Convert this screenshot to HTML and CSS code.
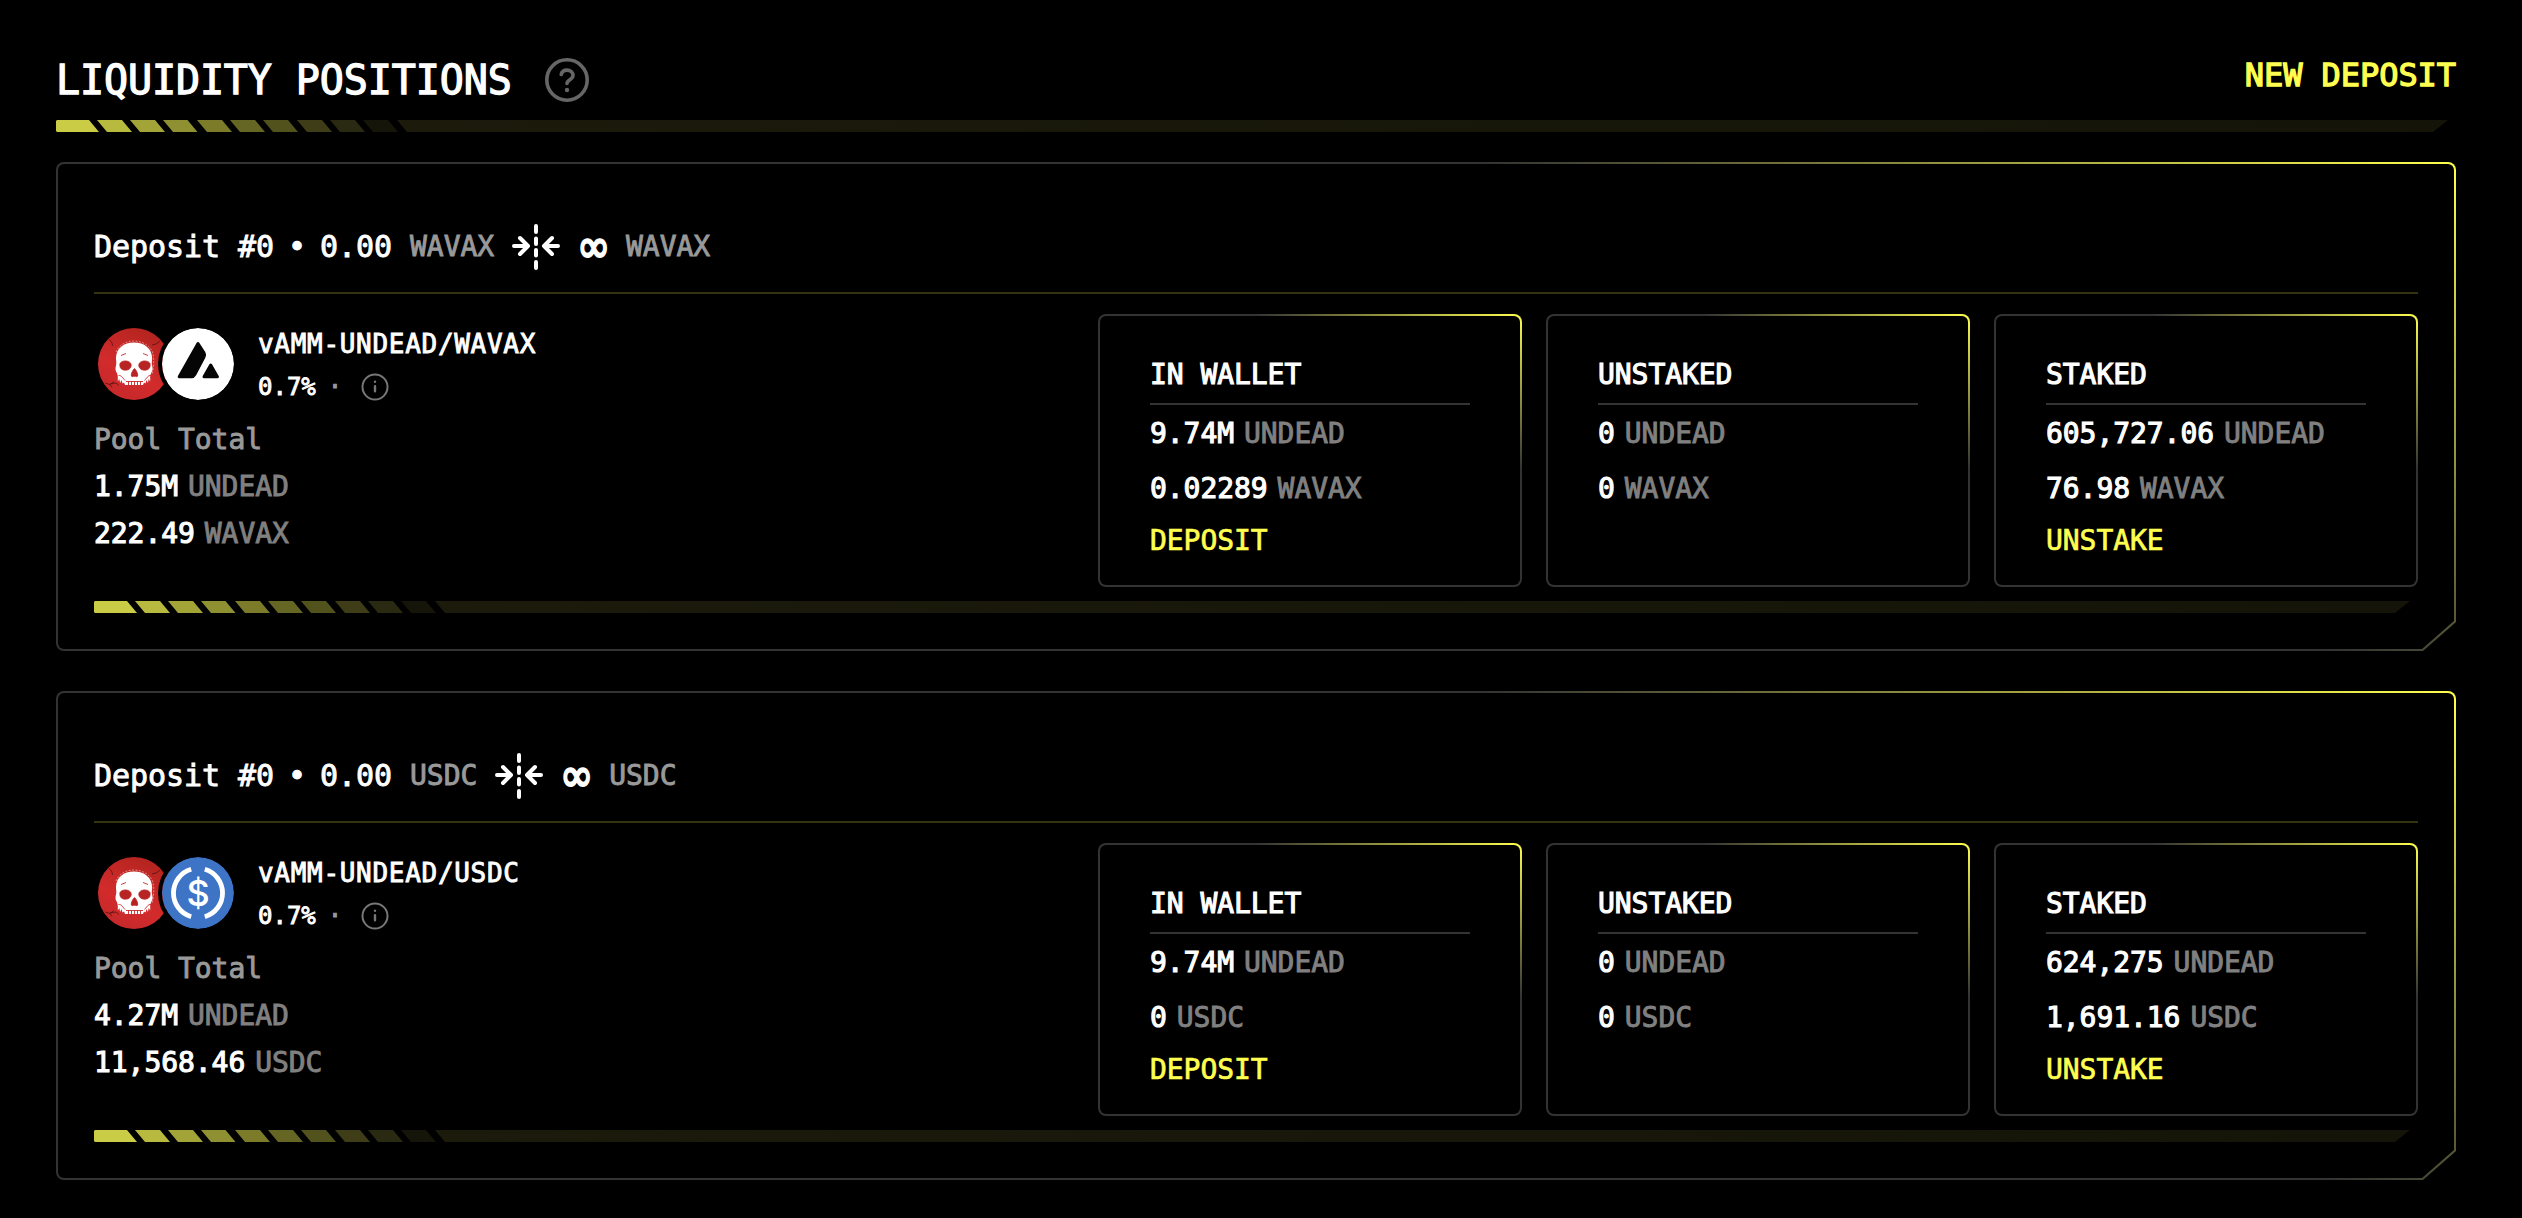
FILE: index.html
```html
<!DOCTYPE html>
<html lang="en">
<head>
<meta charset="utf-8">
<title>Liquidity Positions</title>
<link rel="stylesheet" href="styles.css">
</head>
<body>
<svg class="defs" width="0" height="0" aria-hidden="true">
  <defs>
    <symbol id="stripes" viewBox="0 0 352 12">
      <path fill="#cacc45" d="M1 0H33L43 12H1L0 11V1z"/>
      <path fill="#b8ba3f" d="M41 0h25l10 12H51z"/>
      <path fill="#a3a438" d="M74 0h25l10 12H84z"/>
      <path fill="#8f9031" d="M107 0h24.500l10 12H117z"/>
      <path fill="#7b7b2a" d="M141 0h25l10 12H151z"/>
      <path fill="#666624" d="M174 0h25l10 12H184z"/>
      <path fill="#52521d" d="M207 0h25l10 12H217z"/>
      <path fill="#3e3d17" d="M241 0h25l10 12H251z"/>
      <path fill="#2a2911" d="M274 0h25l10 12H284z"/>
      <path fill="#151509" d="M307 0h25l10 12H317z"/>
    </symbol>
    <linearGradient id="blood" x1="0.7" y1="0" x2="0.2" y2="1">
      <stop offset="0" stop-color="#b3241f"/>
      <stop offset="0.6" stop-color="#d22b2c"/>
      <stop offset="1" stop-color="#c4282a"/>
    </linearGradient>
    <symbol id="undead" viewBox="0 0 72 72">
      <circle cx="36" cy="36" r="36" fill="url(#blood)"/>
      <path fill="none" stroke="#5a1210" stroke-width="0.8" d="M11 11l3 4 0.500 3M62 13l-4 3-4 1M7 55l5 1.500 4-3M12 56.500l2 3M12 56l6-1 3 2.500"/>
      <path fill="#fff" d="M36 14.500c-10.500 0-17.500 6-18 15-.2 3 .8 5 0 8-.8 3-.6 5 .6 7 1 1.800 1.200 3 1.200 5l0 4 1.500-2.500.8 4 1.400-3 1 3.500 1.500-1 1 2.500h18l1-2.500 1.500 1 1-3.500 1.400 3 .8-4 1.500 2.500v-4c0-2 .4-3.200 1.300-5 1.200-2 1.400-4 .6-7-.8-3 .2-5 0-8-.5-9-7.600-15-18.100-15z"/>
      <path fill="#b82324" stroke="#b82324" stroke-width="0.800" stroke-linejoin="round" d="M22 35.500c1.500-3 7.500-3.600 10.500-.5 1.500 2.500.4 5.500-2.500 6.800-3 .8-6.500.4-7.500-2-.7-1.500-.8-3-.5-4.300zM52 35.500c-1.500-3-7.500-3.600-10.500-.5-1.500 2.500-.4 5.500 2.500 6.800 3 .8 6.500.4 7.500-2 .7-1.500.8-3 .5-4.300zM36.500 40.500c-1.800 1.500-3.500 5-3.200 7.500.5.800 1.500.8 2.200.3h2c.7.500 1.700.5 2.200-.3.300-2.500-1.400-6-3.200-7.500z"/>
      <path fill="none" stroke="#c8282a" stroke-width="0.900" d="M20.500 47.500c3-.5 4.500 3 6.500 5M53 47.500c-3-.5-4.500 3-6.500 5M28 53.500h17M30.500 53v4M33.500 53v4M36.500 53v4M39.500 53v4M42.500 53v4M23 27.500l5-2M45 25.500l5 2"/>
      <path fill="none" stroke="#eeb5b0" stroke-width="0.700" stroke-dasharray="2 1.400" d="M18 24c3-7 10-11 18-11s15.500 4 18.500 11c1.300 5 1.600 10 .8 16l-1 6"/>
    </symbol>
    <symbol id="wavax" viewBox="0 0 72 72">
      <circle cx="36" cy="36" r="36" fill="#fff"/>
      <path fill="#050505" stroke="#050505" stroke-width="3" stroke-linejoin="round" d="M36 15.500L17.200 48.800H29.500Q31.500 48.800 32.800 46.500L42 29Q43 26.500 42 24.800zM48.700 37L42 48.800H55.400z"/>
    </symbol>
    <symbol id="usdc" viewBox="0 0 72 72">
      <circle cx="36" cy="36" r="36" fill="#3d74c6"/>
      <path fill="none" stroke="#fff" stroke-width="4.800" d="M29.200 12.300a24.700 24.700 0 0 0 0 47.400M42.800 12.300a24.700 24.700 0 0 1 0 47.400"/>
      <text class="coin-sign" x="36" y="49" text-anchor="middle">$</text>
    </symbol>
    <symbol id="range" viewBox="0 0 48 46">
      <g fill="none" stroke="#fff" stroke-width="4" stroke-linecap="round" stroke-linejoin="round">
        <path d="M2 22H16M8 14l8 8-8 8M46 22H32M40 14l-8 8 8 8"/>
        <path d="M24 2v6M24 14.500v5.500M24 26v5.500M24 38v6"/>
      </g>
    </symbol>
    <symbol id="info" viewBox="0 0 28 28">
      <circle cx="14" cy="14" r="12.500" fill="none" stroke="#777" stroke-width="2"/>
      <path fill="none" stroke="#777" stroke-width="2.400" stroke-linecap="round" d="M14 13.200v5M14 8.700v.1"/>
    </symbol>
  </defs>
</svg>

<main class="page">
  <header class="page-head">
    <div class="title-wrap">
      <h1 class="title">LIQUIDITY POSITIONS</h1>
      <svg class="help" viewBox="0 0 44 44">
        <circle cx="22" cy="22" r="20.200" fill="none" stroke="#666" stroke-width="3.600"/>
        <path fill="none" stroke="#666" stroke-width="3.600" stroke-linecap="round" stroke-linejoin="round" d="M16.200 16.500c.6-2.800 3-4.400 5.800-4.400 3.400 0 6 2.300 6 5.400 0 4-6 4.300-6 8"/>
        <circle cx="22" cy="32" r="2.200" fill="#666"/>
      </svg>
    </div>
    <a class="new-deposit">NEW DEPOSIT</a>
  </header>
  <div class="bar"><svg class="bar-stripes"><use href="#stripes"/></svg><div class="bar-tail"></div></div>

  <section class="card">
    <div class="card-head">
      <span>Deposit #0</span><span class="dot">•</span><span>0.00</span>
      <span class="sym">WAVAX</span>
      <svg class="range"><use href="#range"/></svg>
      <span class="inf">∞</span>
      <span class="sym last">WAVAX</span>
    </div>
    <div class="card-body">
      <div class="pool">
        <div class="pair">
          <div class="coins">
            <svg class="coin"><use href="#undead"/></svg>
            <svg class="coin coin-front"><use href="#wavax"/></svg>
          </div>
          <div>
            <div class="pair-name">vAMM-UNDEAD/WAVAX</div>
            <div class="fee"><span>0.7%</span><span class="sep">·</span><svg class="info"><use href="#info"/></svg></div>
          </div>
        </div>
        <div class="pool-label">Pool Total</div>
        <div class="pool-row"><b>1.75M</b><span>UNDEAD</span></div>
        <div class="pool-row"><b>222.49</b><span>WAVAX</span></div>
      </div>
      <div class="boxes">
        <div class="box">
          <h2 class="box-title">IN WALLET</h2>
          <div class="amount"><b>9.74M</b><span>UNDEAD</span></div>
          <div class="amount second"><b>0.02289</b><span>WAVAX</span></div>
          <a class="action">DEPOSIT</a>
        </div>
        <div class="box">
          <h2 class="box-title">UNSTAKED</h2>
          <div class="amount"><b>0</b><span>UNDEAD</span></div>
          <div class="amount second"><b>0</b><span>WAVAX</span></div>
        </div>
        <div class="box">
          <h2 class="box-title">STAKED</h2>
          <div class="amount"><b>605,727.06</b><span>UNDEAD</span></div>
          <div class="amount second"><b>76.98</b><span>WAVAX</span></div>
          <a class="action">UNSTAKE</a>
        </div>
      </div>
    </div>
    <div class="bar"><svg class="bar-stripes"><use href="#stripes"/></svg><div class="bar-tail"></div></div>
  </section>

  <section class="card">
    <div class="card-head">
      <span>Deposit #0</span><span class="dot">•</span><span>0.00</span>
      <span class="sym">USDC</span>
      <svg class="range"><use href="#range"/></svg>
      <span class="inf">∞</span>
      <span class="sym last">USDC</span>
    </div>
    <div class="card-body">
      <div class="pool">
        <div class="pair">
          <div class="coins">
            <svg class="coin"><use href="#undead"/></svg>
            <svg class="coin coin-front"><use href="#usdc"/></svg>
          </div>
          <div>
            <div class="pair-name">vAMM-UNDEAD/USDC</div>
            <div class="fee"><span>0.7%</span><span class="sep">·</span><svg class="info"><use href="#info"/></svg></div>
          </div>
        </div>
        <div class="pool-label">Pool Total</div>
        <div class="pool-row"><b>4.27M</b><span>UNDEAD</span></div>
        <div class="pool-row"><b>11,568.46</b><span>USDC</span></div>
      </div>
      <div class="boxes">
        <div class="box">
          <h2 class="box-title">IN WALLET</h2>
          <div class="amount"><b>9.74M</b><span>UNDEAD</span></div>
          <div class="amount second"><b>0</b><span>USDC</span></div>
          <a class="action">DEPOSIT</a>
        </div>
        <div class="box">
          <h2 class="box-title">UNSTAKED</h2>
          <div class="amount"><b>0</b><span>UNDEAD</span></div>
          <div class="amount second"><b>0</b><span>USDC</span></div>
        </div>
        <div class="box">
          <h2 class="box-title">STAKED</h2>
          <div class="amount"><b>624,275</b><span>UNDEAD</span></div>
          <div class="amount second"><b>1,691.16</b><span>USDC</span></div>
          <a class="action">UNSTAKE</a>
        </div>
      </div>
    </div>
    <div class="bar"><svg class="bar-stripes"><use href="#stripes"/></svg><div class="bar-tail"></div></div>
  </section>
</main>
</body>
</html>
```
FILE: styles.css
```css
:root {
  --yellow: #ffff4f;
  --edge: linear-gradient(210deg, #ffff4f, #333 30%);
}

* { box-sizing: border-box; }

body {
  margin: 0;
  background: #000;
  color: #fff;
  font-family: "DejaVu Sans Mono", "Liberation Mono", monospace;
  font-size: 28px;
  line-height: 40px;
  letter-spacing: -0.06px;
  -webkit-text-stroke: 0.9px currentColor;
  white-space: nowrap;
}

h1, h2 { margin: 0; font-weight: 400; }
b { font-weight: 400; -webkit-text-stroke: 1.1px currentColor; }
svg { display: block; flex: none; }
.defs { position: absolute; }

.page {
  height: 1218px;
  padding: 45px 66px 0 56px;
  overflow: hidden;
}

.page-head {
  display: flex;
  justify-content: space-between;
  height: 75px;
}
.title-wrap {
  display: flex;
  align-items: center;
  gap: 33px;
  height: 60px;
  margin-top: 5px;
}
.title {
  font-size: 40px;
  line-height: 60px;
  letter-spacing: -0.1px;
  -webkit-text-stroke-width: 1.3px;
}
.help { width: 44px; height: 44px; }
.new-deposit {
  color: var(--yellow);
  font-size: 32px;
  line-height: 60px;
  -webkit-text-stroke-width: 1.3px;
}

.bar { display: flex; height: 12px; padding-right: 8px; }
.bar-stripes { width: 352px; height: 12px; }
.bar-tail {
  flex: 1;
  margin-left: -11px;
  background: linear-gradient(90deg, #1b1a0b, #141408);
  clip-path: polygon(0 0, 100% 0, calc(100% - 15px) 100%, 10px 100%);
}

.card {
  position: relative;
  z-index: 0;
  height: 489px;
  margin-top: 30px;
  padding: 65px 38px 0;
  border-radius: 8px;
  background: var(--edge);
  clip-path: polygon(0 0, 100% 0, 100% calc(100% - 29px), calc(100% - 33px) 100%, 0 100%);
}
.card + .card { margin-top: 40px; }
/* Black face of the card, leaving a 2px outline */
.card::before {
  content: "";
  position: absolute;
  z-index: -1;
  inset: 2px;
  border-radius: 6px;
  background: #000;
  clip-path: polygon(0 0, 100% 0, 100% calc(100% - 28px), calc(100% - 32px) 100%, 0 100%);
}

.card-head {
  display: flex;
  align-items: center;
  height: 67px;
  padding-bottom: 25px;
  border-bottom: 2px solid #333312;
  font-size: 30px;
}
.dot { margin: 0 14px; }
.sym { margin-left: 18px; color: #999; font-size: 28px; }
.sym.last { margin-left: 17px; }
.range { width: 48px; height: 46px; margin-left: 18px; }
.inf {
  width: 31px;
  margin-left: 18px;
  font: 37px/40px "DejaVu Sans", sans-serif;
  text-align: center;
  -webkit-text-stroke-width: 1.8px;
  transform: scale(1.08, 1.25);
}

.card-body {
  display: flex;
  justify-content: space-between;
  padding: 20px 0 14px;
}

.pair {
  display: flex;
  height: 102px;
  padding-top: 8px;
}
.coins { display: flex; margin: 6px 24px 0 4px; }
.coin { width: 72px; height: 72px; }
.coin-front {
  margin-left: -8px;
  border-radius: 50%;
  box-shadow: 0 0 0 4px #000;
}
.coin-sign { font: 500 36px Inter, sans-serif; fill: #fff; stroke: none; -webkit-text-stroke: 0; }
.pair-name { font-size: 26px; line-height: 44px; letter-spacing: 0.7px; }
.fee { display: flex; align-items: center; font-size: 24px; line-height: 42px; letter-spacing: 0; }
.sep { margin-left: 12px; color: #999; }
.info { width: 28px; height: 28px; margin-left: 19px; }
.pool-label { color: #999; line-height: 47px; }
.pool-row, .amount { display: flex; gap: 10px; }
.pool-row { line-height: 47px; }
.pool-row span, .amount span { color: #808080; }

.boxes { display: flex; gap: 24px; }
.box {
  width: 424px;
  height: 273px;
  padding: 39px 50px 0;
  border: 2px solid transparent;
  border-radius: 8px;
  background:
    linear-gradient(#000, #000) padding-box,
    var(--edge) border-box;
}
.box-title {
  margin-bottom: 9px;
  padding-bottom: 8px;
  border-bottom: 2px solid #333;
  font-size: 28px;
  -webkit-text-stroke-width: 1.1px;
}
.amount.second { margin: 15px 0 12px; }
.action { display: block; color: var(--yellow); -webkit-text-stroke-width: 0.7px; }
```
